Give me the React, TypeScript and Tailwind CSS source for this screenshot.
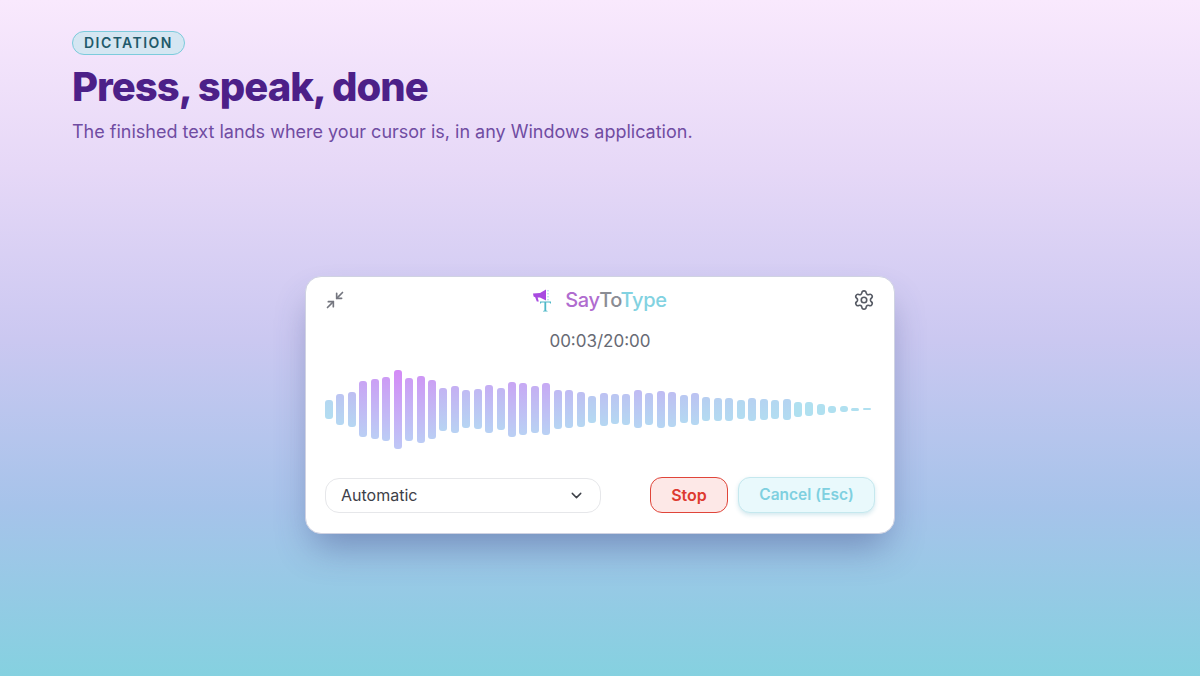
import { ChevronDown, Minimize2, Settings } from "lucide-react";

const heights = [
  19, 31, 35, 56, 60, 64, 79, 63, 67, 59, 43, 47, 38, 40, 48, 42, 55, 52, 47, 52, 39, 38, 35, 27,
  33, 30, 31, 38, 32, 37, 35, 28, 32, 24, 23, 23, 19, 23, 21, 19, 21, 15, 14, 11, 7, 6, 3, 2,
];

function mix(a: number[], b: number[], t: number) {
  const c = a.map((v, i) => Math.round(v + (b[i] - v) * t));
  return `rgb(${c[0]},${c[1]},${c[2]})`;
}

function barStyle(h: number) {
  const t = Math.min(1, Math.max(0, (h - 15) / 64));
  const e = Math.pow(t, 0.8);
  return {
    height: h,
    background: `linear-gradient(to bottom, ${mix([176, 224, 240], [212, 138, 246], e)}, ${mix(
      [176, 224, 240],
      [190, 200, 246],
      e,
    )})`,
  };
}

function Logo() {
  return (
    <svg width="22" height="24" viewBox="0 0 22 24" className="shrink-0">
      <path d="M1 5.5 L8 5 L14 1.5 L14 12.5 L8 9.5 L5.6 9.5 L6.8 13.5 L4.8 13.5 L3.2 9.3 L1.6 8.6 Z" fill="#a84ae0" />
      <path d="M16 2v1.4M16 5v1.4M16 8v1.4M16 11v1.4" stroke="#8fd2e0" strokeWidth="1" />
      <path d="M8 13.5 H19 V15.6 H18.2 L17.6 14.5 H14.2 V22.4 L15.6 23 V23.6 H11 V23 L12.4 22.4 V14.5 H9.4 L8.8 15.6 H8 Z" fill="#4fb8c8" />
    </svg>
  );
}

export default function App() {
  return (
    <div className="flex h-[676px] w-full flex-col overflow-hidden bg-[linear-gradient(180deg,#f9e9fd_0%,#e6d8f7_25%,#cbc8f1_50%,#a6c3ea_75%,#85d1e0_100%)] font-['Inter',sans-serif]">
      <header className="px-[72px] pt-[30px]">
        <span className="inline-block rounded-full border-[1.5px] border-[#7ccbdc] bg-[#d5e6f2] px-[11px] py-[2px] text-[14px] leading-[18px] font-semibold tracking-[1.45px] text-[#1f5a6b]">
          DICTATION
        </span>
        <h1 className="mt-[7px] text-[40px] leading-[50px] font-extrabold tracking-[-1px] text-[#4c2088]">
          Press, speak, done
        </h1>
        <p className="mt-[8px] text-[18px] leading-[24px] text-[#704ca2]">
          The finished text lands where your cursor is, in any Windows application.
        </p>
      </header>
      <main className="flex flex-1 items-center justify-center pb-[10px]">
        <section className="flex h-[258px] w-[590px] flex-col rounded-[16px] border border-[#cfd2e2] bg-white px-[19px] shadow-[0_20px_36px_-8px_rgba(60,70,130,0.45)]">
          <div className="flex h-[46px] items-center justify-between">
            <Minimize2 size={20} strokeWidth={2} className="text-[#74767f]" />
            <div className="flex items-center gap-[11px] pl-[1px]">
              <Logo />
              <div className="text-[20px] leading-[26px] font-medium tracking-[-0.3px]">
                <span className="text-[#b06ccf]">Say</span>
                <span className="text-[#8b8d95]">To</span>
                <span className="text-[#82d2e1]">Type</span>
              </div>
            </div>
            <Settings size={22} strokeWidth={1.75} className="text-[#565a64]" />
          </div>
          <div className="mt-[6px] text-center text-[17px] leading-[24px] text-[#676a74]">00:03/20:00</div>
          <div className="mt-[16px] flex h-[80px] items-center justify-between pr-[4px]">
            {heights.map((h, i) => (
              <div key={i} className="w-[8px] rounded-[3px] blur-[0.4px]" style={barStyle(h)} />
            ))}
          </div>
          <div className="mt-[28px] flex items-center">
            <div className="flex h-[35px] w-[276px] items-center justify-between rounded-[14px] border border-[#e6e7ea] pr-[15px] pl-[15px] text-[16px] text-[#3d4048]">
              <span>Automatic</span>
              <ChevronDown size={17} strokeWidth={2} className="text-[#3d4048]" />
            </div>
            <button className="ml-[49px] h-[36px] w-[78px] rounded-[12px] border-[1.5px] border-[#e0453a] bg-[#fde8e7] text-[16px] font-semibold text-[#dd3a30]">
              Stop
            </button>
            <button className="ml-[10px] h-[36px] w-[137px] rounded-[12px] border-[1.5px] border-[#c5e8ee] bg-[#e9f9fc] text-[15.5px] font-semibold text-[#7fd0e0] shadow-[0_2px_4px_rgba(110,180,200,0.3)]">
              Cancel (Esc)
            </button>
          </div>
        </section>
      </main>
    </div>
  );
}
